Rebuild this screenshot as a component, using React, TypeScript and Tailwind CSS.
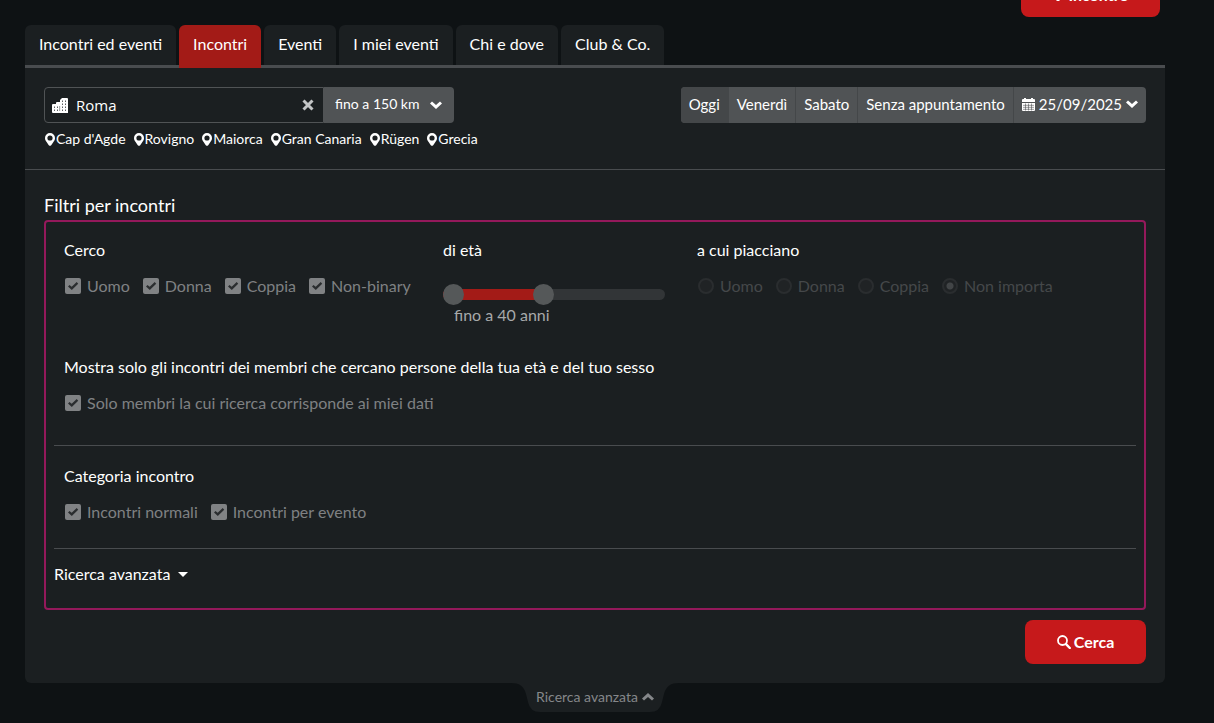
import React, { useState } from 'react';
import { clsx } from 'clsx';

const tabs = ['Incontri ed eventi', 'Incontri', 'Eventi', 'I miei eventi', 'Chi e dove', 'Club & Co.'];
const places = ["Cap d'Agde", 'Rovigno', 'Maiorca', 'Gran Canaria', 'Rügen', 'Grecia'];
const days = ['Oggi', 'Venerdì', 'Sabato', 'Senza appuntamento'];
const distances = ['fino a 50 km', 'fino a 150 km', 'fino a 300 km'];

const PinIcon = () => (
  <svg viewBox="0 0 10 13" className="h-[13px] w-[10px]" fill="currentColor" aria-hidden="true">
    <path
      fillRule="evenodd"
      d="M5 0a5 5 0 0 1 5 5c0 1.800-.7 2.800-1.600 4L6.200 12.300Q5 13.400 3.800 12.300L1.600 9C.7 7.800 0 6.800 0 5a5 5 0 0 1 5-5Zm0 2.400A2.600 2.600 0 1 0 5 7.600 2.600 2.600 0 0 0 5 2.400Z"
    />
  </svg>
);

const CityIcon = () => (
  <svg viewBox="0 0 16 15" className="h-[15px] w-4" aria-hidden="true">
    <path fill="currentColor" d="M8 2 10 0h5q1 0 1 1v14H1q-1 0-1-1V7q0-1 1-1h3V5q0-1 1-1h3Z" />
    <path
      fill="#5b5e60"
      d="M10 2.500h1V4h-1ZM13 2.500h1V4h-1ZM10 5.500h1V7h-1ZM13 5.500h1V7h-1ZM10 8.500h1V10h-1ZM13 8.500h1V10h-1ZM10 11.500h1V13h-1ZM13 11.500h1V13h-1ZM2 8.500h1V10H2ZM5 8.500h1V10H5ZM2 11.500h1V13H2ZM5 11.500h1V13H5ZM7.500 8h.6v5h-.6Z"
    />
  </svg>
);

const CalendarIcon = () => (
  <svg viewBox="0 0 13 13" className="h-[13px] w-[13px]" aria-hidden="true">
    <path fill="currentColor" d="M0 2q0-1 1-1h1V0h2v1h5V0h2v1h1q1 0 1 1v2H0ZM0 5h13v7q0 1-1 1H1q-1 0-1-1Z" />
    <path stroke="#505355" strokeWidth=".6" d="M1 7.300h11M1 9.300h11M1 11.300h11M3.500 5.500v7M6.500 5.500v7M9.500 5.500v7" />
  </svg>
);

const Chevron = ({ up = false }: { up?: boolean }) => (
  <svg viewBox="0 0 12 8" className={clsx('h-2 w-3', up && 'rotate-180')} fill="currentColor" aria-hidden="true">
    <path d="M2 .5 6 4 10 .5 12 2.500 6 8 0 2.500Z" />
  </svg>
);

const CloseIcon = () => (
  <svg viewBox="0 0 12 12" className="h-3 w-3" fill="none" stroke="currentColor" strokeWidth="3" aria-hidden="true">
    <path d="m1.500 1.500 9 9m0-9-9 9" />
  </svg>
);

const PlusIcon = () => (
  <svg viewBox="0 0 12 12" className="h-3 w-3" fill="none" stroke="currentColor" strokeWidth="3" aria-hidden="true">
    <path d="M6 0v12M0 6h12" />
  </svg>
);

const SearchIcon = () => (
  <svg viewBox="0 0 14 14" className="h-[14px] w-[14px]" fill="none" stroke="currentColor" aria-hidden="true">
    <circle cx="5.500" cy="5.500" r="4.500" strokeWidth="1.800" />
    <path d="m9 9.200 3.800 3.800" strokeWidth="2.400" strokeLinecap="round" />
  </svg>
);

const CheckOption = ({ label }: { label: string }) => {
  const [checked, setChecked] = useState(true);
  return (
    <label className="flex items-center gap-[6px] text-[#7f8183]">
      <span className="relative flex h-4 w-4">
        <input
          type="checkbox"
          checked={checked}
          onChange={(e) => setChecked(e.target.checked)}
          className="h-4 w-4 appearance-none rounded-xs bg-[#808284]"
        />
        {checked && (
          <svg viewBox="0 0 16 16" className="pointer-events-none absolute inset-0 h-4 w-4" fill="#2a2d2f">
            <path d="m3 8.500 1.500-1.500 2.200 1.800 5-4.700L13.200 5.700l-6.400 6.300Z" />
          </svg>
        )}
      </span>
      {label}
    </label>
  );
};

const RadioOption = ({ label, defaultChecked = false }: { label: string; defaultChecked?: boolean }) => (
  <label className="flex items-center gap-[6px] text-[#45484a]">
    <input
      type="radio"
      name="liked"
      defaultChecked={defaultChecked}
      className="h-4 w-4 appearance-none rounded-full border-2 border-[#2a2d2f] bg-[#202325] checked:bg-[radial-gradient(circle,#424547_0_3px,#202325_4px)]"
    />
    {label}
  </label>
);

const AgeSlider = () => {
  const [age, setAge] = useState(40);
  const pct = ((age - 18) / 54) * 100;
  return (
    <div>
      <div className="relative flex h-[21px] w-[222px] items-center">
        <div className="h-[11px] w-full overflow-hidden rounded-full bg-[#323537]">
          <div className="h-full bg-[#a31b17]" style={{ width: `${pct + 4}%` }} />
        </div>
        <span className="absolute left-0 h-[21px] w-[21px] rounded-full bg-[#555859]" />
        <input
          type="range"
          aria-label="Età massima"
          min={18}
          max={67}
          value={age}
          onChange={(e) => setAge(Number(e.target.value))}
          className="absolute inset-0 w-full appearance-none bg-transparent [&::-webkit-slider-thumb]:h-[21px] [&::-webkit-slider-thumb]:w-[21px] [&::-webkit-slider-thumb]:appearance-none [&::-webkit-slider-thumb]:rounded-full [&::-webkit-slider-thumb]:bg-[#555859]"
        />
      </div>
      <p className="pl-[11px] leading-5 text-[#a7a9aa]">fino a {age} anni</p>
    </div>
  );
};

const App: React.FC = () => {
  const [activeTab, setActiveTab] = useState('Incontri');
  const [place, setPlace] = useState('Roma');

  return (
    <div className="min-h-screen bg-[#0e1214] pr-[49px] pl-[25px] font-['Lato','Liberation_Sans',sans-serif] text-base text-white">
      <header className="mb-2 flex h-[17px] items-end justify-end overflow-hidden pr-[5px]">
        <button
          type="button"
          className="flex h-11 w-[139px] shrink-0 items-center justify-center gap-1 rounded-lg bg-[#c6191b] font-bold"
        >
          <PlusIcon />
          Incontro
        </button>
      </header>

      <nav className="flex h-[43px] gap-[3px] border-b-3 border-[#494c4f]">
        {tabs.map((tab) => (
          <button
            key={tab}
            type="button"
            onClick={() => setActiveTab(tab)}
            className={clsx(
              'rounded-t-md px-[14px]',
              tab === activeTab ? '-mb-[3px] bg-[#a31b17] pb-[5px]' : 'bg-[#1b1f21] pb-[2px]'
            )}
          >
            {tab}
          </button>
        ))}
      </nav>

      <main className="rounded-b-md bg-[#1b1f21]">
        <section className="flex items-start justify-between border-b border-[#494c4f] px-[19px] pt-[19px] pb-5">
          <div>
            <div className="flex h-9">
              <div className="flex w-[280px] items-center gap-2 rounded-l-sm border border-[#505355] pr-[9px] pl-[7px]">
                <CityIcon />
                <input
                  type="text"
                  aria-label="Luogo"
                  value={place}
                  onChange={(e) => setPlace(e.target.value)}
                  className="min-w-0 flex-1 bg-transparent font-['Open_Sans',sans-serif] text-[15px] outline-none"
                />
                <button type="button" aria-label="Cancella" onClick={() => setPlace('')} className="text-[#c3c5c6]">
                  <CloseIcon />
                </button>
              </div>
              <div className="relative flex items-center">
                <select
                  aria-label="Distanza"
                  defaultValue="fino a 150 km"
                  className="h-9 w-[130px] appearance-none rounded-r-sm bg-[#505355] pb-[2px] pl-[11px] text-sm"
                >
                  {distances.map((d) => (
                    <option key={d}>{d}</option>
                  ))}
                </select>
                <span className="pointer-events-none absolute right-3">
                  <Chevron />
                </span>
              </div>
            </div>
            <div className="mt-[6px] flex gap-2 pl-px text-sm leading-5">
              {places.map((p) => (
                <a key={p} href="#" className="flex items-center gap-px">
                  <PinIcon />
                  {p}
                </a>
              ))}
            </div>
          </div>

          <div className="flex h-9 overflow-hidden rounded-sm bg-[#505355] text-[15px]">
            {days.map((day) => (
              <button
                key={day}
                type="button"
                className={clsx('border-r border-[#444749] px-2 pb-[2px]', day === 'Oggi' && 'bg-[#444749]')}
              >
                {day}
              </button>
            ))}
            <button type="button" className="flex items-center gap-1 px-2 pb-[2px]">
              <CalendarIcon />
              25/09/2025
              <Chevron />
            </button>
          </div>
        </section>

        <section className="px-[19px] pt-[23px] pb-[19px]">
          <h2 className="text-lg leading-6">Filtri per incontri</h2>
          <div className="mt-[3px] rounded-sm border-2 border-[#94195b] px-2 pb-6">
            <div className="flex px-[10px] pt-[18px]">
              <div className="w-[379px]">
                <h3 className="leading-5">Cerco</h3>
                <div className="mt-4 flex gap-[13px] pl-px leading-5">
                  <CheckOption label="Uomo" />
                  <CheckOption label="Donna" />
                  <CheckOption label="Coppia" />
                  <CheckOption label="Non-binary" />
                </div>
              </div>
              <div className="w-[254px]">
                <h3 className="mb-6 leading-5">di età</h3>
                <AgeSlider />
              </div>
              <div>
                <h3 className="leading-5">a cui piacciano</h3>
                <div className="mt-4 flex gap-[13px] pl-px leading-5">
                  <RadioOption label="Uomo" />
                  <RadioOption label="Donna" />
                  <RadioOption label="Coppia" />
                  <RadioOption label="Non importa" defaultChecked />
                </div>
              </div>
            </div>

            <div className="border-b border-[#494c4f] px-[10px] pt-8 pb-8">
              <h3 className="leading-5">
                Mostra solo gli incontri dei membri che cercano persone della tua età e del tuo sesso
              </h3>
              <div className="mt-4 flex pl-px leading-5">
                <CheckOption label="Solo membri la cui ricerca corrisponde ai miei dati" />
              </div>
            </div>

            <div className="border-b border-[#494c4f] px-[10px] pt-5 pb-[26px]">
              <h3 className="leading-5">Categoria incontro</h3>
              <div className="mt-4 flex gap-[13px] pl-px leading-5">
                <CheckOption label="Incontri normali" />
                <CheckOption label="Incontri per evento" />
              </div>
            </div>

            <button type="button" className="mt-[15px] flex items-center gap-2 leading-5">
              Ricerca avanzata
              <svg viewBox="0 0 10 5" className="h-[5px] w-[10px]" fill="currentColor" aria-hidden="true">
                <path d="M0 0h10L5 5Z" />
              </svg>
            </button>
          </div>

          <div className="mt-[10px] flex justify-end">
            <button
              type="button"
              className="flex h-11 w-[121px] items-center justify-center gap-[3px] rounded-lg bg-[#c6191b] font-bold"
            >
              <SearchIcon />
              Cerca
            </button>
          </div>
        </section>
      </main>

      <footer className="flex justify-center">
        <button
          type="button"
          className="relative flex h-[29px] w-[168px] items-center justify-center pb-[2px] text-sm text-[#85878a]"
        >
          <svg viewBox="0 0 168 29" className="absolute inset-0 h-full w-full" fill="#1b1f21" aria-hidden="true">
            <path d="M0 0h168c-8 0-13 3-15 11l-2 8q-2 10-12 10H29q-10 0-12-10l-2-8C13 3 8 0 0 0Z" />
          </svg>
          <span className="relative flex items-center gap-1">
            Ricerca avanzata
            <Chevron up />
          </span>
        </button>
      </footer>
    </div>
  );
};

export default App;
